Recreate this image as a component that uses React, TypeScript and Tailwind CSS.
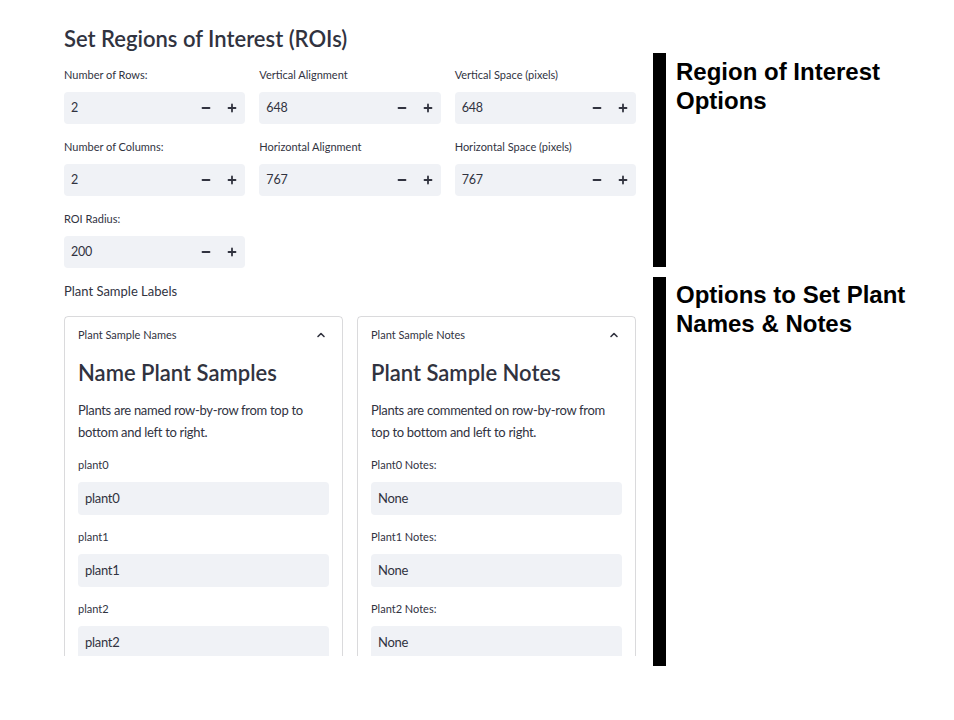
import React from "react";

const FONT = { fontFamily: "Lato, 'Noto Sans', sans-serif" };

function Minus() {
  return (
    <svg width="10" height="10" viewBox="0 0 10 10">
      <path d="M1.5 5h7" stroke="#31333F" strokeWidth="1.8" strokeLinecap="round" />
    </svg>
  );
}
function Plus() {
  return (
    <svg width="10" height="10" viewBox="0 0 10 10">
      <path d="M1.5 5h7M5 1.5v7" stroke="#31333F" strokeWidth="1.8" strokeLinecap="round" />
    </svg>
  );
}
function Chevron() {
  return (
    <svg width="12" height="12" viewBox="0 0 12 12">
      <path d="M3 7.5 6 4.5l3 3" fill="none" stroke="#31333F" strokeWidth="1.6" strokeLinecap="round" strokeLinejoin="round" />
    </svg>
  );
}

function NumField({ label, value }: { label: string; value: string }) {
  return (
    <div className="flex flex-col">
      <div className="h-[16px] leading-[16px] text-[11px] text-[#31333F] whitespace-nowrap">{label}</div>
      <div className="mt-[9px] h-[32px] rounded-[4px] bg-[#f0f2f6] flex items-center">
        <div className="flex-1 pl-[7px] text-[12.5px] tracking-[-0.2px] text-[#31333F]">{value}</div>
        <div className="w-[26px] h-full flex items-center justify-center"><Minus /></div>
        <div className="w-[26px] h-full flex items-center justify-center"><Plus /></div>
      </div>
    </div>
  );
}

function TextField({ label, value }: { label: string; value: string }) {
  return (
    <div className="flex flex-col">
      <div className="h-[16px] leading-[16px] text-[11px] text-[#31333F] whitespace-nowrap">{label}</div>
      <div className="mt-[9px] h-[33px] rounded-[4px] bg-[#f0f2f6] flex items-center pl-[7px] text-[13px] tracking-[-0.3px] text-[#31333F]">
        {value}
      </div>
    </div>
  );
}

function Card({
  header,
  title,
  lines,
  fields,
}: {
  header: string;
  title: string;
  lines: string[];
  fields: [string, string][];
}) {
  return (
    <div className="border border-[rgba(49,51,63,0.18)] rounded-[4px] px-[13px] pt-[10px] h-[400px]">
      <div className="flex items-center justify-between h-[16px]">
        <span className="text-[11px] leading-[16px] text-[#31333F]">{header}</span>
        <span className="mr-[2px] flex items-center"><Chevron /></span>
      </div>
      <div className="mt-[15px] h-[30px] leading-[30px] text-[22px] font-semibold text-[#31333F] whitespace-nowrap">{title}</div>
      <div className="mt-[11px] text-[13px] tracking-[-0.3px] leading-[22px] text-[#31333F]">
        {lines.map((l, i) => (
          <div key={i} className="whitespace-nowrap">{l}</div>
        ))}
      </div>
      <div className="mt-[14px] flex flex-col gap-[14px]">
        {fields.map(([l, v]) => (
          <TextField key={l} label={l} value={v} />
        ))}
      </div>
    </div>
  );
}

export default function App() {
  return (
    <div className="w-[954px] h-[720px] bg-white flex overflow-hidden" style={FONT}>
      <div className="ml-[64px] w-[572px] h-[656px] overflow-hidden pt-[24px] shrink-0">
        <div className="h-[30px] leading-[30px] text-[22px] font-semibold text-[#31333F] whitespace-nowrap">
          Set Regions of Interest (ROIs)
        </div>
        <div className="mt-[13px] grid grid-cols-3 gap-x-[14px] gap-y-[15px]">
          <NumField label="Number of Rows:" value="2" />
          <NumField label="Vertical Alignment" value="648" />
          <NumField label="Vertical Space (pixels)" value="648" />
          <NumField label="Number of Columns:" value="2" />
          <NumField label="Horizontal Alignment" value="767" />
          <NumField label="Horizontal Space (pixels)" value="767" />
          <NumField label="ROI Radius:" value="200" />
        </div>
        <div className="mt-[13px] h-[20px] leading-[20px] text-[13px] text-[#31333F]">Plant Sample Labels</div>
        <div className="mt-[15px] grid grid-cols-2 gap-x-[14px]">
          <Card
            header="Plant Sample Names"
            title="Name Plant Samples"
            lines={["Plants are named row-by-row from top to", "bottom and left to right."]}
            fields={[
              ["plant0", "plant0"],
              ["plant1", "plant1"],
              ["plant2", "plant2"],
            ]}
          />
          <Card
            header="Plant Sample Notes"
            title="Plant Sample Notes"
            lines={["Plants are commented on row-by-row from", "top to bottom and left to right."]}
            fields={[
              ["Plant0 Notes:", "None"],
              ["Plant1 Notes:", "None"],
              ["Plant2 Notes:", "None"],
            ]}
          />
        </div>
      </div>
      <div
        className="ml-[17px] pt-[53px] flex flex-col gap-[10px]"
        style={{ fontFamily: "'Liberation Sans', Arial, sans-serif" }}
      >
        <div className="flex">
          <div className="w-[13px] h-[214px] bg-black shrink-0" />
          <div className="ml-[10px] pt-[4px] text-[24px] leading-[29px] font-bold text-black whitespace-nowrap">
            Region of Interest
            <br />
            Options
          </div>
        </div>
        <div className="flex">
          <div className="w-[13px] h-[389px] bg-black shrink-0" />
          <div className="ml-[10px] pt-[3px] text-[24px] leading-[29px] font-bold text-black whitespace-nowrap">
            Options to Set Plant
            <br />
            Names &amp; Notes
          </div>
        </div>
      </div>
    </div>
  );
}
